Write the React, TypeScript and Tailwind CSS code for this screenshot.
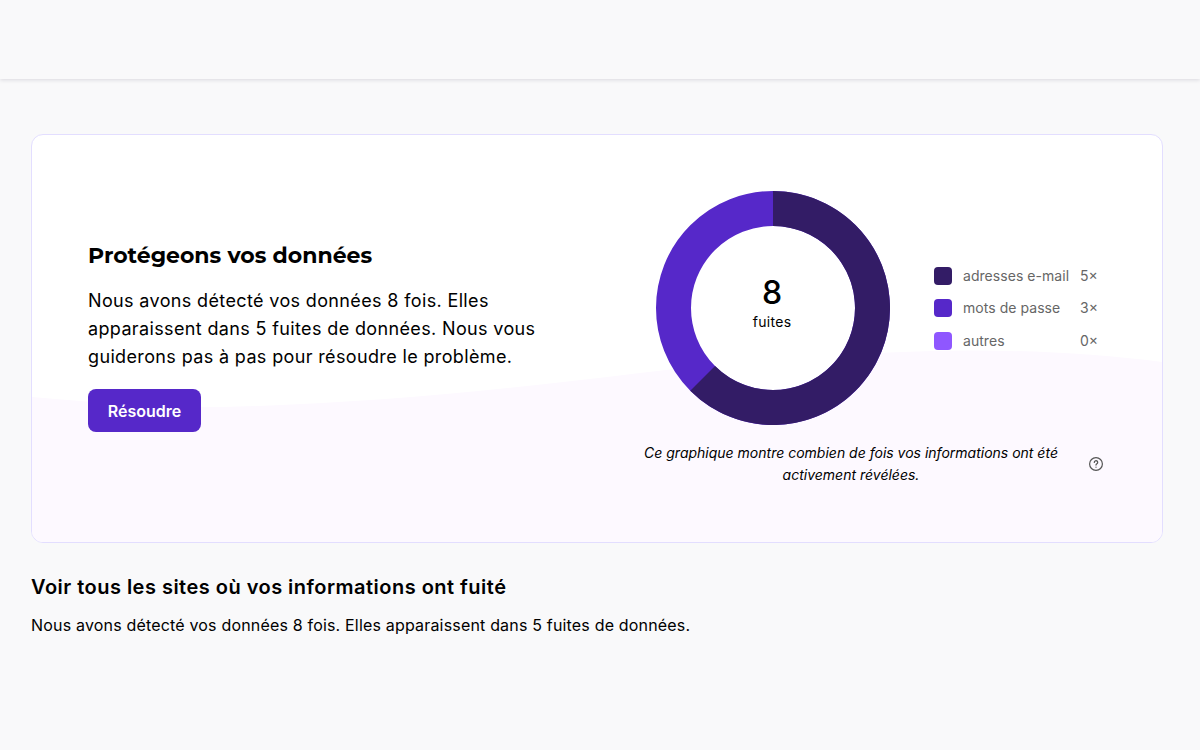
import React from 'react';

const legend = [
  { label: 'adresses e-mail', count: '5×', color: 'bg-[#331c66]' },
  { label: 'mots de passe', count: '3×', color: 'bg-[#5628c9]' },
  { label: 'autres', count: '0×', color: 'bg-[#8f57ff]' },
];

const Donut = () => (
  <div className="relative w-[234px] h-[234px] shrink-0">
    <svg width="234" height="234" viewBox="0 0 234 234">
      <circle cx="117" cy="117" r="99.5" fill="#ffffff" stroke="#5628c9" strokeWidth="35" />
      <path d="M117 17.5A99.5 99.5 0 1 1 46.64 187.36" fill="none" stroke="#331c66" strokeWidth="35" />
    </svg>
    <div className="absolute inset-0 flex flex-col items-center justify-center mt-[-10px] ml-[-2px]">
      <span className="text-[32px] leading-[40px] font-medium text-black">8</span>
      <span className="text-sm leading-[20px] tracking-[0.3px] text-black mt-[-1px]">fuites</span>
    </div>
  </div>
);

const App = () => {
  return (
    <div className="w-full h-[750px] overflow-hidden bg-[#f9f9fa] font-['Inter','Liberation_Sans',sans-serif]">
      <div className="h-[79px] bg-[#f9f9fa] shadow-[0_1px_4px_rgba(30,20,60,0.14)]" />

      <div className="pt-[55px] px-[31px]">
        <div className="relative w-[1132px] h-[409px] rounded-xl border border-[#e3deff] bg-white overflow-hidden flex items-center">
          <svg className="absolute left-0 bottom-0" width="1130" height="200" viewBox="0 0 1130 200" preserveAspectRatio="none">
            <path d="M0 55C60 60 120 66 190 65C330 62 470 48 608 31C700 20 800 12 900 9C980 7 1060 11 1130 20V200H0Z" fill="#fdf9ff" />
          </svg>

          <div className="relative w-[480px] ml-[56px] mt-[-5px] shrink-0">
            <h1 className="font-['Montserrat','Inter',sans-serif] text-[22px] leading-[30px] font-bold text-black">Protégeons vos données</h1>
            <p className="mt-[16px] text-lg leading-[28px] tracking-[0.36px] text-black">
              Nous avons détecté vos données 8 fois. Elles apparaissent dans 5 fuites de données. Nous vous guiderons pas à pas pour résoudre le problème.
            </p>
            <button className="mt-[18px] w-[113px] h-[43px] pt-[1px] rounded-lg bg-[#5628c9] text-white text-base font-semibold">Résoudre</button>
          </div>

          <div className="relative ml-[64px] w-[472px] mt-[-1px] shrink-0">
            <div className="flex items-center pl-[24px]">
              <Donut />
              <div className="ml-[44px] flex flex-col gap-[14.5px] mt-[1px]">
                {legend.map((item) => (
                  <div key={item.label} className="flex items-center h-[18px] text-sm text-[#666666]">
                    <span className={`w-[18px] h-[18px] rounded-[4px] ${item.color}`} />
                    <span className="ml-[11px] w-[117px] tracking-[0.05px] whitespace-nowrap">{item.label}</span>
                    <span>{item.count}</span>
                  </div>
                ))}
              </div>
            </div>
            <div className="mt-[17px] flex items-center">
              <p className="w-[442px] text-center text-sm leading-[22px] italic text-black">
                Ce graphique montre combien de fois vos informations ont été activement révélées.
              </p>
              <svg className="ml-[18px] shrink-0" width="16" height="16" viewBox="0 0 16 16" fill="none" stroke="#555555" strokeWidth="1.2" strokeLinecap="round">
                <circle cx="8" cy="8" r="6.4" />
                <path d="M6.3 6.4a1.7 1.7 0 1 1 2.6 1.4c-.6.4-.9.7-.9 1.3" />
                <path d="M8 11.1v.05" />
              </svg>
            </div>
          </div>
        </div>

        <h2 className="mt-[30px] text-xl leading-[28px] font-semibold tracking-[0.48px] text-black">Voir tous les sites où vos informations ont fuité</h2>
        <p className="mt-[12px] text-base leading-[24px] tracking-[0.18px] text-black">Nous avons détecté vos données 8 fois. Elles apparaissent dans 5 fuites de données.</p>
      </div>
    </div>
  );
};

export default App;
